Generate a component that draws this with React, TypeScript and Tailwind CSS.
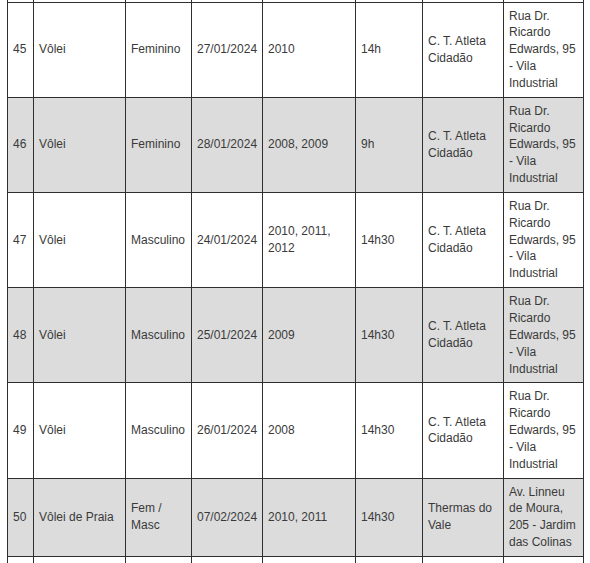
import React from "react";

type Row = {
  n: string;
  sport: string;
  cat: string;
  date: string;
  years: string;
  time: string;
  place: string;
  addr: string;
};

const rows: Row[] = [
  { n: "45", sport: "Vôlei", cat: "Feminino", date: "27/01/2024", years: "2010", time: "14h", place: "C. T. Atleta Cidadão", addr: "Rua Dr. Ricardo Edwards, 95 - Vila Industrial" },
  { n: "46", sport: "Vôlei", cat: "Feminino", date: "28/01/2024", years: "2008, 2009", time: "9h", place: "C. T. Atleta Cidadão", addr: "Rua Dr. Ricardo Edwards, 95 - Vila Industrial" },
  { n: "47", sport: "Vôlei", cat: "Masculino", date: "24/01/2024", years: "2010, 2011, 2012", time: "14h30", place: "C. T. Atleta Cidadão", addr: "Rua Dr. Ricardo Edwards, 95 - Vila Industrial" },
  { n: "48", sport: "Vôlei", cat: "Masculino", date: "25/01/2024", years: "2009", time: "14h30", place: "C. T. Atleta Cidadão", addr: "Rua Dr. Ricardo Edwards, 95 - Vila Industrial" },
  { n: "49", sport: "Vôlei", cat: "Masculino", date: "26/01/2024", years: "2008", time: "14h30", place: "C. T. Atleta Cidadão", addr: "Rua Dr. Ricardo Edwards, 95 - Vila Industrial" },
  { n: "50", sport: "Vôlei de Praia", cat: "Fem / Masc", date: "07/02/2024", years: "2010, 2011", time: "14h30", place: "Thermas do Vale", addr: "Av. Linneu de Moura, 205 - Jardim das Colinas" },
];

const td = "border border-[#2e2e2e] px-[5px] py-[5px] align-middle";

export default function App() {
  return (
    <div
      className="w-[590px] h-[563px] overflow-hidden bg-white pl-[7px] text-[12px] leading-[16.85px] text-[#3a3a3a]"
      style={{ fontFamily: '"Liberation Sans", Arial, sans-serif' }}
    >
      <table className="w-[576px] table-fixed border-collapse">
        <colgroup>
          <col className="w-[26px]" />
          <col className="w-[92px]" />
          <col className="w-[66px]" />
          <col className="w-[71px]" />
          <col className="w-[93px]" />
          <col className="w-[67px]" />
          <col className="w-[81px]" />
          <col className="w-[80px]" />
        </colgroup>
        <tbody>
          <tr className="h-[2px] bg-white">
            {Array.from({ length: 8 }).map((_, i) => (
              <td key={i} className="border-x border-[#2e2e2e] p-0 h-[2px]" />
            ))}
          </tr>
          {rows.map((r, i) => (
            <tr key={r.n} className={i % 2 === 1 ? "bg-[#dcdcdc]" : "bg-white"}>
              <td className={td}>{r.n}</td>
              <td className={td}>{r.sport}</td>
              <td className={td}>{r.cat}</td>
              <td className={`${td} whitespace-nowrap`}>{r.date}</td>
              <td className={td}>{r.years}</td>
              <td className={td}>{r.time}</td>
              <td className={td}>{r.place}</td>
              <td className={td}>{r.addr}</td>
            </tr>
          ))}
          <tr className="bg-white">
            {Array.from({ length: 8 }).map((_, i) => (
              <td key={i} className={`${td} h-[40px]`} />
            ))}
          </tr>
        </tbody>
      </table>
    </div>
  );
}
